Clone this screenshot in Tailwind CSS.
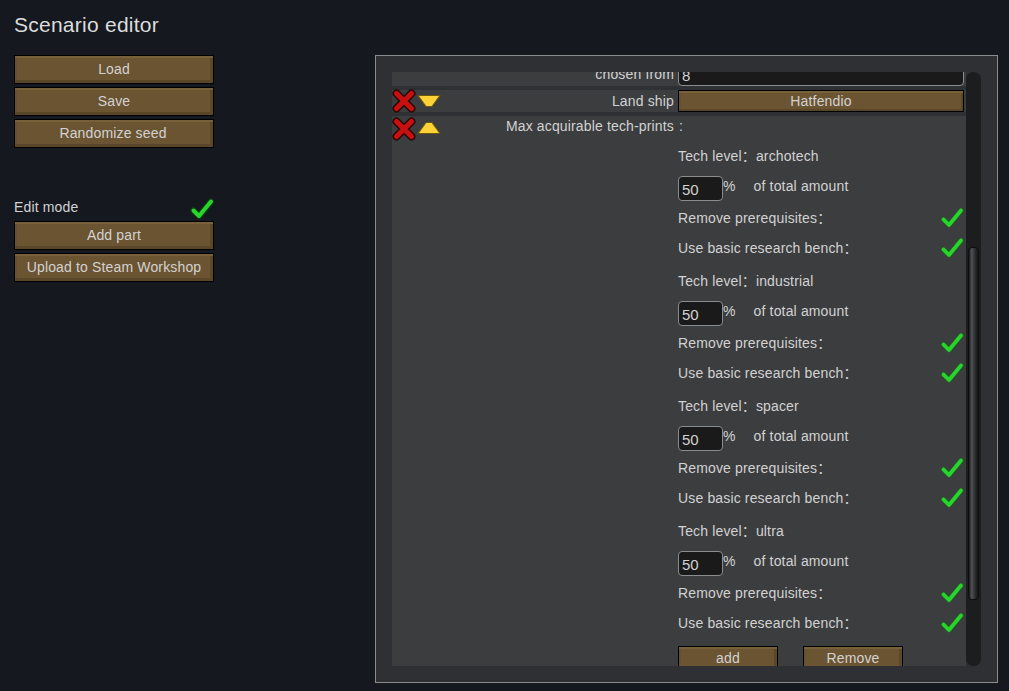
<!DOCTYPE html>
<html><head><meta charset="utf-8">
<script src="https://cdn.jsdelivr.net/npm/@tailwindcss/browser@4"></script>
</head>
<body class="m-0 overflow-hidden">
<div class="w-[1009px] h-[691px] bg-[#15191f] flex font-['Liberation_Sans','Noto_Sans_CJK_SC',sans-serif] text-[14px] tracking-[0.15px] text-[#d2d2d2]">
  <!-- left -->
  <div class="w-[375px] pl-[14px] flex flex-col">
    <div class="h-[55px] pt-[12px] text-[21px] leading-[26px] tracking-[0.25px] text-[#dcdcdc]">Scenario editor</div>
    <div class="w-[200px] flex flex-col gap-[3px]">
      <div class="h-[29px] bg-[#6b5431] border border-black flex items-center justify-center shadow-[inset_0_2px_0_#77603a,inset_0_-3px_0_#5a4628,inset_2px_0_0_#665030,inset_-3px_0_0_#5c4829]">Load</div>
      <div class="h-[29px] bg-[#6b5431] border border-black flex items-center justify-center shadow-[inset_0_2px_0_#77603a,inset_0_-3px_0_#5a4628,inset_2px_0_0_#665030,inset_-3px_0_0_#5c4829]">Save</div>
      <div class="h-[29px] bg-[#6b5431] border border-black flex items-center justify-center pr-[2px] shadow-[inset_0_2px_0_#77603a,inset_0_-3px_0_#5a4628,inset_2px_0_0_#665030,inset_-3px_0_0_#5c4829]">Randomize seed</div>
    </div>
    <div class="w-[200px] h-[24px] mt-[49px] flex items-center justify-between">
      <span class="relative top-[-2px]">Edit mode</span>
      <svg class="ml-auto" width="24" height="24" viewBox="0 0 24 24"><path d="M3.5 13.5L9 19L21 4.5" fill="none" stroke="#0d3a12" stroke-width="6.4" stroke-linejoin="round" stroke-linecap="round"/><path d="M3.5 13.5L9 19L21 4.5" fill="none" stroke="#28d52c" stroke-width="4" stroke-linejoin="round" stroke-linecap="round"/></svg>
    </div>
    <div class="w-[200px] flex flex-col gap-[3px]">
      <div class="h-[29px] bg-[#6b5431] border border-black flex items-center justify-center shadow-[inset_0_2px_0_#77603a,inset_0_-3px_0_#5a4628,inset_2px_0_0_#665030,inset_-3px_0_0_#5c4829]">Add part</div>
      <div class="h-[29px] bg-[#6b5431] border border-black flex items-center justify-center shadow-[inset_0_2px_0_#77603a,inset_0_-3px_0_#5a4628,inset_2px_0_0_#665030,inset_-3px_0_0_#5c4829]">Upload to Steam Workshop</div>
    </div>
  </div>
  <!-- panel -->
  <div class="mt-[55px] w-[623px] h-[628px] border border-[#8a8c8e] bg-[#2e3033] pl-[16px] pt-[16px] flex">
    <div class="w-[574px] h-[594px] overflow-hidden flex flex-col">
      <div class="h-[14px] overflow-hidden bg-[#3c3d3f] flex shrink-0">
        <div class="w-[282px] text-right -mt-[8px] h-[20px] leading-[20px]">chosen from</div>
        <div class="ml-[4px] w-[286px] h-[30px] -mt-[16px] bg-[#1a1a1a] border border-[#8a8c8e] rounded-[4px] pl-[3px] pt-[9px] leading-[20px] text-[15px]">8</div>
      </div>
      <div class="h-[22px] mt-[4px] bg-[#3c3d3f] flex items-center shrink-0">
        <svg width="24" height="24" viewBox="0 0 24 24" class="shrink-0"><path d="M4.5 4.5L19.5 19.5M19.5 4.5L4.5 19.5" stroke="#2a0505" stroke-width="8" stroke-linecap="round"/><path d="M4.5 4.5L19.5 19.5M19.5 4.5L4.5 19.5" stroke="#c91010" stroke-width="5" stroke-linecap="round"/></svg>
        <svg width="24" height="14" viewBox="0 0 24 14" class="shrink-0 ml-[1px]"><path d="M1 1.5H23L15 12.5H9Z" fill="#ffd338" stroke="#6b5610" stroke-width="1.2" stroke-linejoin="round"/></svg>
        <div class="w-[233px] text-right">Land ship</div>
        <div class="ml-[4px] w-[286px] h-[22px] bg-[#6b5431] border border-black flex items-center justify-center shadow-[inset_0_2px_0_#77603a,inset_0_-2px_0_#5a4628,inset_2px_0_0_#665030,inset_-2px_0_0_#5c4829]">Hatfendio</div>
      </div>
      <div class="mt-[4px] bg-[#3c3d3f] flex-1 flex flex-col">
        <div class="h-[25px] flex items-center shrink-0">
          <svg width="24" height="24" viewBox="0 0 24 24" class="shrink-0"><path d="M4.5 4.5L19.5 19.5M19.5 4.5L4.5 19.5" stroke="#2a0505" stroke-width="8" stroke-linecap="round"/><path d="M4.5 4.5L19.5 19.5M19.5 4.5L4.5 19.5" stroke="#c91010" stroke-width="5" stroke-linecap="round"/></svg>
          <svg width="24" height="14" viewBox="0 0 24 14" class="shrink-0 ml-[1px] mb-[2px]"><path d="M1 12.5H23L15 1.5H9Z" fill="#ffd338" stroke="#6b5610" stroke-width="1.2" stroke-linejoin="round"/></svg>
          <div class="w-[233px] text-right mb-[5px] whitespace-pre">Max acquirable tech-prints</div>
          <div class="ml-[5px] mb-[5px]">:</div>
        </div>
        <div class="pl-[286px] pr-[2px] flex flex-col">
          <!-- group -->
          <div class="h-[30px] flex items-center whitespace-pre">Tech level：archotech</div>
          <div class="h-[32px] flex items-start whitespace-pre"><div class="w-[45px] h-[25px] mt-[5px] bg-[#1a1a1a] border border-[#8a8c8e] rounded-[4px] pl-[3px] pt-[3px] text-[15px] leading-[20px] tracking-normal">50</div><span class="mt-[5px] leading-[20px]">%</span><span class="ml-[18px] mt-[5px] leading-[20px]">of total amount</span></div>
          <div class="h-[30px] flex items-center justify-between whitespace-pre">Remove prerequisites：<svg width="24" height="24" viewBox="0 0 24 24"><path d="M3.5 13.5L9 19L21 4.5" fill="none" stroke="#1f6a22" stroke-width="5" stroke-linejoin="round" stroke-linecap="round"/><path d="M3.5 13.5L9 19L21 4.5" fill="none" stroke="#28d52c" stroke-width="3.6" stroke-linejoin="round" stroke-linecap="round"/></svg></div>
          <div class="h-[30px] mb-[3px] flex items-center justify-between whitespace-pre">Use basic research bench：<svg width="24" height="24" viewBox="0 0 24 24"><path d="M3.5 13.5L9 19L21 4.5" fill="none" stroke="#1f6a22" stroke-width="5" stroke-linejoin="round" stroke-linecap="round"/><path d="M3.5 13.5L9 19L21 4.5" fill="none" stroke="#28d52c" stroke-width="3.6" stroke-linejoin="round" stroke-linecap="round"/></svg></div>
          <!-- group -->
          <div class="h-[30px] flex items-center whitespace-pre">Tech level：industrial</div>
          <div class="h-[32px] flex items-start whitespace-pre"><div class="w-[45px] h-[25px] mt-[5px] bg-[#1a1a1a] border border-[#8a8c8e] rounded-[4px] pl-[3px] pt-[3px] text-[15px] leading-[20px] tracking-normal">50</div><span class="mt-[5px] leading-[20px]">%</span><span class="ml-[18px] mt-[5px] leading-[20px]">of total amount</span></div>
          <div class="h-[30px] flex items-center justify-between whitespace-pre">Remove prerequisites：<svg width="24" height="24" viewBox="0 0 24 24"><path d="M3.5 13.5L9 19L21 4.5" fill="none" stroke="#1f6a22" stroke-width="5" stroke-linejoin="round" stroke-linecap="round"/><path d="M3.5 13.5L9 19L21 4.5" fill="none" stroke="#28d52c" stroke-width="3.6" stroke-linejoin="round" stroke-linecap="round"/></svg></div>
          <div class="h-[30px] mb-[3px] flex items-center justify-between whitespace-pre">Use basic research bench：<svg width="24" height="24" viewBox="0 0 24 24"><path d="M3.5 13.5L9 19L21 4.5" fill="none" stroke="#1f6a22" stroke-width="5" stroke-linejoin="round" stroke-linecap="round"/><path d="M3.5 13.5L9 19L21 4.5" fill="none" stroke="#28d52c" stroke-width="3.6" stroke-linejoin="round" stroke-linecap="round"/></svg></div>
          <!-- group -->
          <div class="h-[30px] flex items-center whitespace-pre">Tech level：spacer</div>
          <div class="h-[32px] flex items-start whitespace-pre"><div class="w-[45px] h-[25px] mt-[5px] bg-[#1a1a1a] border border-[#8a8c8e] rounded-[4px] pl-[3px] pt-[3px] text-[15px] leading-[20px] tracking-normal">50</div><span class="mt-[5px] leading-[20px]">%</span><span class="ml-[18px] mt-[5px] leading-[20px]">of total amount</span></div>
          <div class="h-[30px] flex items-center justify-between whitespace-pre">Remove prerequisites：<svg width="24" height="24" viewBox="0 0 24 24"><path d="M3.5 13.5L9 19L21 4.5" fill="none" stroke="#1f6a22" stroke-width="5" stroke-linejoin="round" stroke-linecap="round"/><path d="M3.5 13.5L9 19L21 4.5" fill="none" stroke="#28d52c" stroke-width="3.6" stroke-linejoin="round" stroke-linecap="round"/></svg></div>
          <div class="h-[30px] mb-[3px] flex items-center justify-between whitespace-pre">Use basic research bench：<svg width="24" height="24" viewBox="0 0 24 24"><path d="M3.5 13.5L9 19L21 4.5" fill="none" stroke="#1f6a22" stroke-width="5" stroke-linejoin="round" stroke-linecap="round"/><path d="M3.5 13.5L9 19L21 4.5" fill="none" stroke="#28d52c" stroke-width="3.6" stroke-linejoin="round" stroke-linecap="round"/></svg></div>
          <!-- group -->
          <div class="h-[30px] flex items-center whitespace-pre">Tech level：ultra</div>
          <div class="h-[32px] flex items-start whitespace-pre"><div class="w-[45px] h-[25px] mt-[5px] bg-[#1a1a1a] border border-[#8a8c8e] rounded-[4px] pl-[3px] pt-[3px] text-[15px] leading-[20px] tracking-normal">50</div><span class="mt-[5px] leading-[20px]">%</span><span class="ml-[18px] mt-[5px] leading-[20px]">of total amount</span></div>
          <div class="h-[30px] flex items-center justify-between whitespace-pre">Remove prerequisites：<svg width="24" height="24" viewBox="0 0 24 24"><path d="M3.5 13.5L9 19L21 4.5" fill="none" stroke="#1f6a22" stroke-width="5" stroke-linejoin="round" stroke-linecap="round"/><path d="M3.5 13.5L9 19L21 4.5" fill="none" stroke="#28d52c" stroke-width="3.6" stroke-linejoin="round" stroke-linecap="round"/></svg></div>
          <div class="h-[30px] flex items-center justify-between whitespace-pre">Use basic research bench：<svg width="24" height="24" viewBox="0 0 24 24"><path d="M3.5 13.5L9 19L21 4.5" fill="none" stroke="#1f6a22" stroke-width="5" stroke-linejoin="round" stroke-linecap="round"/><path d="M3.5 13.5L9 19L21 4.5" fill="none" stroke="#28d52c" stroke-width="3.6" stroke-linejoin="round" stroke-linecap="round"/></svg></div>
          <div class="mt-[8px] flex gap-[25px]">
            <div class="w-[100px] h-[24px] shrink-0 bg-[#6b5431] border border-black border-b-0 flex items-center justify-center shadow-[inset_0_2px_0_#77603a,inset_2px_0_0_#665030,inset_-3px_0_0_#5c4829]">add</div>
            <div class="w-[100px] h-[24px] shrink-0 bg-[#6b5431] border border-black border-b-0 flex items-center justify-center shadow-[inset_0_2px_0_#77603a,inset_2px_0_0_#665030,inset_-3px_0_0_#5c4829]">Remove</div>
          </div>
        </div>
      </div>
    </div>
    <!-- scrollbar -->
    <div class="w-[15px] h-[594px] bg-[#1c1d1e] rounded-[7px] relative shrink-0">
      <div class="absolute left-[2px] top-[175px] w-[11px] h-[353px] rounded-[4px] border border-[#0e0e0f] bg-[linear-gradient(90deg,#1a1a1b,#505154_30%,#2a2b2d_70%,#161617)]"></div>
    </div>
  </div>
</div>
</body></html>
